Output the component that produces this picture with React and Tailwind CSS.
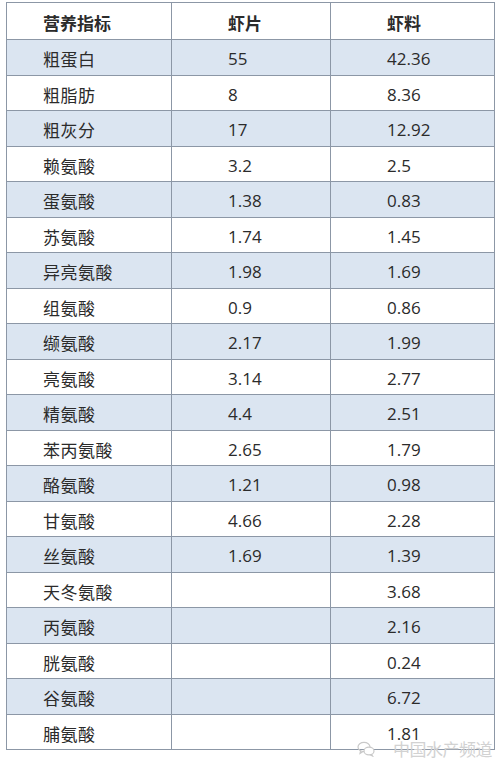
import React from "react";

const rows = [
  ["粗蛋白", "55", "42.36"],
  ["粗脂肪", "8", "8.36"],
  ["粗灰分", "17", "12.92"],
  ["赖氨酸", "3.2", "2.5"],
  ["蛋氨酸", "1.38", "0.83"],
  ["苏氨酸", "1.74", "1.45"],
  ["异亮氨酸", "1.98", "1.69"],
  ["组氨酸", "0.9", "0.86"],
  ["缬氨酸", "2.17", "1.99"],
  ["亮氨酸", "3.14", "2.77"],
  ["精氨酸", "4.4", "2.51"],
  ["苯丙氨酸", "2.65", "1.79"],
  ["酪氨酸", "1.21", "0.98"],
  ["甘氨酸", "4.66", "2.28"],
  ["丝氨酸", "1.69", "1.39"],
  ["天冬氨酸", "", "3.68"],
  ["丙氨酸", "", "2.16"],
  ["胱氨酸", "", "0.24"],
  ["谷氨酸", "", "6.72"],
  ["脯氨酸", "", "1.81"],
];

function WeChatIcon() {
  return (
    <svg width="18" height="16" viewBox="0 0 18 16" fill="none" stroke="#c9c9c9" strokeWidth="1.2">
      <ellipse cx="7" cy="6" rx="6" ry="4.6" />
      <path d="M3.5 10 L3 12.5 L6 10.5" />
      <ellipse cx="12" cy="10" rx="5" ry="3.8" fill="#fff" />
      <path d="M14.5 13.4 L15.5 15 L13 13.7" />
    </svg>
  );
}

export default function App() {
  return (
    <div className="relative w-[500px] h-[767px] bg-white text-[#2b2b2b] font-['Noto_Sans_CJK_SC',sans-serif]">
      <div className="ml-[6px] pt-[2px] w-[489px]">
        <div className="border border-b-0 border-[#8c97a6]">
          <div className="flex h-[37px] border-b border-[#8c97a6] bg-white font-bold text-[17px]">
            <div className="w-[165px] border-r border-[#8c97a6] pl-[36px] pt-[3px] flex items-center">
              营养指标
            </div>
            <div className="w-[159px] border-r border-[#8c97a6] pl-[56px] pt-[3px] flex items-center">
              虾片
            </div>
            <div className="flex-1 pl-[56px] pt-[3px] flex items-center">
              虾料
            </div>
          </div>
          {rows.map((r, i) => (
            <div
              key={r[0]}
              className={
                "flex h-[35.5px] border-b border-[#8c97a6] text-[17px] " +
                (i % 2 === 0 ? "bg-[#dbe5f1]" : "bg-white")
              }
            >
              <div className="w-[165px] border-r border-[#8c97a6] pl-[36px] pt-[3px] flex items-center tracking-[0.5px]">
                {r[0]}
              </div>
              <div className="w-[159px] border-r border-[#8c97a6] pl-[56px] pt-[3px] flex items-center font-['Open_Sans',sans-serif]">
                {r[1]}
              </div>
              <div className="flex-1 pl-[56px] pt-[3px] flex items-center font-['Open_Sans',sans-serif]">
                {r[2]}
              </div>
            </div>
          ))}
        </div>
      </div>
      {/* watermark over the last row */}
      <div className="absolute left-[357px] top-[736px] flex items-center gap-[18px]">
        <WeChatIcon />
        <span className="text-[17px] text-[#d2d2d2] tracking-[-0.5px]">中国水产频道</span>
      </div>
    </div>
  );
}
